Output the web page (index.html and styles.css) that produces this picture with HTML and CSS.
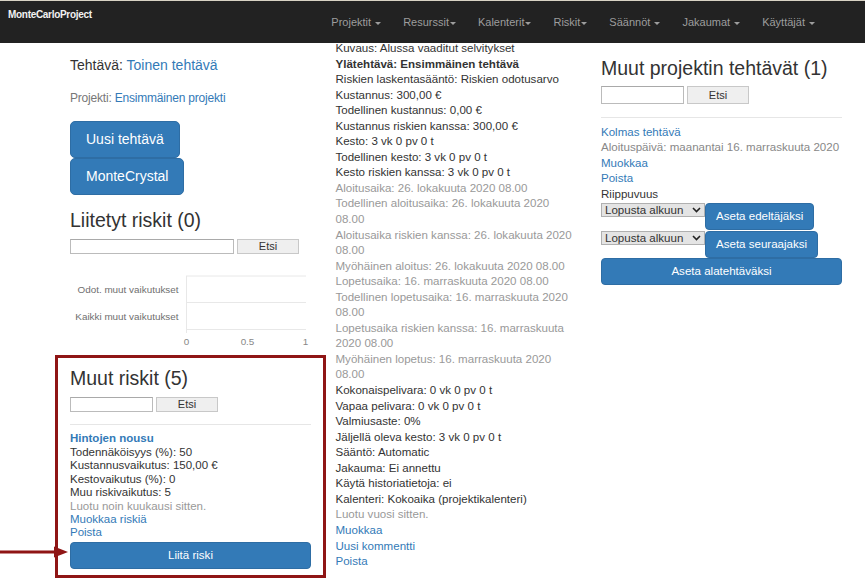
FILE: index.html
```html
<!DOCTYPE html>
<html lang="fi">
<head>
  <meta charset="UTF-8" />
  <title>MonteCarloProject - Toinen tehtävä</title>
  <link rel="stylesheet" href="styles.css">
</head>
<body>
  <nav class="navbar">
    <a class="brand" href="#">MonteCarloProject</a>
    <ul class="nav">
      <li>Projektit <span class="caret"></span></li>
      <li>Resurssit<span class="caret"></span></li>
      <li>Kalenterit<span class="caret"></span></li>
      <li>Riskit<span class="caret"></span></li>
      <li>Säännöt <span class="caret"></span></li>
      <li>Jakaumat <span class="caret"></span></li>
      <li>Käyttäjät <span class="caret"></span></li>
    </ul>
  </nav>

  <div class="page">
    <!-- left: task header + risks -->
    <div class="col">
      <h4 class="task-title">Tehtävä: <a href="#">Toinen tehtävä</a></h4>
      <div class="project"><span class="label">Projekti:</span> <a href="#">Ensimmäinen projekti</a></div>
      <div class="btn-stack">
        <button class="btn btn-lg">Uusi tehtävä</button>
        <button class="btn btn-lg">MonteCrystal</button>
      </div>

      <h3 class="section-title first">Liitetyt riskit (0)</h3>
      <div class="search">
        <input type="text" class="wide">
        <button class="search-btn">Etsi</button>
      </div>

      <svg class="chart" width="241" height="86" viewBox="0 0 241 86">
        <line x1="116" y1="14" x2="236" y2="14" stroke="#e8e8e8" />
        <line x1="116" y1="40.5" x2="236" y2="40.5" stroke="#e8e8e8" />
        <line x1="116" y1="67.5" x2="236" y2="67.5" stroke="#e8e8e8" />
        <line x1="116.5" y1="14" x2="116.5" y2="71" stroke="#e8e8e8" />
        <text x="108.5" y="30.5" text-anchor="end">Odot. muut vaikutukset</text>
        <text x="108.5" y="57.5" text-anchor="end">Kaikki muut vaikutukset</text>
        <text class="tick" x="116.5" y="83" text-anchor="middle">0</text>
        <text class="tick" x="177.5" y="83" text-anchor="middle">0.5</text>
        <text class="tick" x="235.5" y="83" text-anchor="middle">1</text>
      </svg>

      <div class="risk-box">
        <svg class="pointer" width="70" height="12" viewBox="0 0 70 12">
          <line x1="0" y1="6" x2="57" y2="6" stroke="#8f1515" stroke-width="3" />
          <polygon points="54,0.5 68,6 54,11.5" fill="#8f1515" />
        </svg>
        <h3 class="section-title">Muut riskit (5)</h3>
        <div class="search">
          <input type="text">
          <button class="search-btn">Etsi</button>
        </div>
        <hr>
        <div class="risk">
          <a href="#" class="risk-name">Hintojen nousu</a>
          <div>Todennäköisyys (%): 50</div>
          <div>Kustannusvaikutus: 150,00 €</div>
          <div>Kestovaikutus (%): 0</div>
          <div>Muu riskivaikutus: 5</div>
          <div class="muted">Luotu noin kuukausi sitten.</div>
          <a href="#">Muokkaa riskiä</a>
          <a href="#">Poista</a>
        </div>
        <button class="btn btn-block">Liitä riski</button>
      </div>
    </div>

    <!-- middle: task details -->
    <div class="col details">
      <div>Kuvaus: Alussa vaaditut selvitykset</div>
      <div class="strong">Ylätehtävä: Ensimmäinen tehtävä</div>
      <div>Riskien laskentasääntö: Riskien odotusarvo</div>
      <div>Kustannus: 300,00 €</div>
      <div>Todellinen kustannus: 0,00 €</div>
      <div>Kustannus riskien kanssa: 300,00 €</div>
      <div>Kesto: 3 vk 0 pv 0 t</div>
      <div>Todellinen kesto: 3 vk 0 pv 0 t</div>
      <div>Kesto riskien kanssa: 3 vk 0 pv 0 t</div>
      <div class="muted">Aloitusaika: 26. lokakuuta 2020 08.00</div>
      <div class="muted">Todellinen aloitusaika: 26. lokakuuta 2020 08.00</div>
      <div class="muted">Aloitusaika riskien kanssa: 26. lokakuuta 2020 08.00</div>
      <div class="muted">Myöhäinen aloitus: 26. lokakuuta 2020 08.00</div>
      <div class="muted">Lopetusaika: 16. marraskuuta 2020 08.00</div>
      <div class="muted">Todellinen lopetusaika: 16. marraskuuta 2020 08.00</div>
      <div class="muted">Lopetusaika riskien kanssa: 16. marraskuuta 2020 08.00</div>
      <div class="muted">Myöhäinen lopetus: 16. marraskuuta 2020 08.00</div>
      <div>Kokonaispelivara: 0 vk 0 pv 0 t</div>
      <div>Vapaa pelivara: 0 vk 0 pv 0 t</div>
      <div>Valmiusaste: 0%</div>
      <div>Jäljellä oleva kesto: 3 vk 0 pv 0 t</div>
      <div>Sääntö: Automatic</div>
      <div>Jakauma: Ei annettu</div>
      <div>Käytä historiatietoja: ei</div>
      <div>Kalenteri: Kokoaika (projektikalenteri)</div>
      <div class="muted">Luotu vuosi sitten.</div>
      <a href="#">Muokkaa</a>
      <a href="#">Uusi kommentti</a>
      <a href="#">Poista</a>
    </div>

    <!-- right: other tasks in project -->
    <div class="col">
      <h3 class="section-title top">Muut projektin tehtävät (1)</h3>
      <div class="search tall">
        <input type="text">
        <button class="search-btn">Etsi</button>
      </div>
      <hr>
      <div class="task">
        <a href="#">Kolmas tehtävä</a>
        <div class="grey nowrap">Aloituspäivä: maanantai 16. marraskuuta 2020</div>
        <a href="#">Muokkaa</a>
        <a href="#">Poista</a>
        <div>Riippuvuus</div>
      </div>
      <div class="dep-row">
        <span class="select-wrap">
          <select><option>Lopusta alkuun</option></select>
          <svg width="9" height="6" viewBox="0 0 9 6"><path d="M1 1 L4.5 4.5 L8 1" fill="none" stroke="#222" stroke-width="1.6" /></svg>
        </span>
        <button class="btn btn-sm">Aseta edeltäjäksi</button>
      </div>
      <div class="dep-row">
        <span class="select-wrap">
          <select><option>Lopusta alkuun</option></select>
          <svg width="9" height="6" viewBox="0 0 9 6"><path d="M1 1 L4.5 4.5 L8 1" fill="none" stroke="#222" stroke-width="1.6" /></svg>
        </span>
        <button class="btn btn-sm">Aseta seuraajaksi</button>
      </div>
      <button class="btn btn-block">Aseta alatehtäväksi</button>
    </div>
  </div>
</body>
</html>
```

FILE: styles.css
```css
body {
  margin: 0;
  font-family: "Liberation Sans", Arial, sans-serif;
  font-size: 11.55px;
  line-height: 15.55px;
  color: #333;
  background: #fff;
}

a {
  color: #337ab7;
  text-decoration: none;
}

/* Navbar */
.navbar {
  position: fixed;
  top: 0;
  left: 0;
  right: 0;
  height: 42px;
  background: #222;
  border-top: 1px solid #d8d2c4;
  display: flex;
  z-index: 10;
}

.brand {
  color: #f2f2f2;
  font-weight: bold;
  font-size: 10px;
  letter-spacing: -0.3px;
  line-height: 12px;
  padding: 8px 0 0 8px;
}

.nav {
  list-style: none;
  margin: 0 0 0 auto;
  padding: 0 39px 0 0;
  display: flex;
}

.nav li {
  color: #9d9d9d;
  font-size: 11px;
  line-height: 42px;
  padding: 0 11px;
}

.caret {
  display: inline-block;
  width: 0;
  height: 0;
  margin-left: 1px;
  vertical-align: middle;
  border-top: 3px solid #9d9d9d;
  border-left: 3px solid transparent;
  border-right: 3px solid transparent;
}

/* Page */
.page {
  display: grid;
  grid-template-columns: 241px 241px 241px;
  column-gap: 24.5px;
  align-items: start;
  padding: 41px 0 0 70px;
}

.task-title {
  margin: 17.3px 0 0;
  font-size: 14px;
  line-height: 15.4px;
  font-weight: normal;
}

.project {
  margin-top: 18px;
  font-size: 12px;
  line-height: 13.2px;
  letter-spacing: -0.2px;
}

.project .label {
  color: #777;
}

.btn-stack {
  display: flex;
  flex-direction: column;
  align-items: flex-start;
  margin-top: 16.5px;
}

.btn {
  font-family: inherit;
  background: #337ab7;
  border: 1px solid #2e6da4;
  color: #fff;
  border-radius: 4px;
  cursor: pointer;
}

.btn-lg {
  font-size: 14px;
  line-height: 17px;
  padding: 9px 15px;
  border-radius: 5px;
}

.btn-sm {
  font-size: 11.55px;
  line-height: 17px;
  padding: 4px 10px;
}

.btn-block {
  display: block;
  width: 100%;
  font-size: 11.55px;
  line-height: 17px;
  padding: 4px 10px;
}

.section-title {
  margin: 0;
  font-size: 19.5px;
  line-height: 21.7px;
  font-weight: normal;
}

.section-title.first {
  margin-top: 15px;
}

.section-title.top {
  margin-top: 17.3px;
}

.search {
  display: flex;
  gap: 3px;
  margin-top: 7px;
  height: 15px;
}

.search input {
  width: 83px;
  box-sizing: border-box;
  height: 100%;
  border: 1px solid #bbb;
  border-top-color: #a9a9a9;
  padding: 0 3px;
  margin: 0;
}

.search input.wide {
  width: 164px;
}

.search-btn {
  width: 62px;
  height: 100%;
  margin: 0;
  padding: 0;
  font-family: inherit;
  font-size: 11px;
  line-height: 13px;
  color: #333;
  background: #efefef;
  border: 1px solid #c8c8c8;
}

.search.tall {
  height: 18px;
  margin-top: 6px;
}

hr {
  border: 0;
  border-top: 1px solid #e6e6e6;
  margin: 12.5px 0 0;
}

.chart {
  display: block;
  margin-top: 8px;
}

.chart text {
  font-family: "Liberation Sans", Arial, sans-serif;
  font-size: 9.9px;
  fill: #6f6f6f;
}

.chart text.tick {
  fill: #888;
}

/* Muut riskit box */
.risk-box {
  position: relative;
  margin: 7px -15px 0;
  padding: 10px 12px 6px;
  border: 3px solid #8f1515;
}

.pointer {
  position: absolute;
  left: -58px;
  top: 188px;
}

.risk {
  margin-top: 7px;
  font-size: 11.5px;
  line-height: 13.45px;
}

.risk a,
.risk div {
  display: block;
}

.risk .risk-name {
  font-weight: bold;
}

.risk-box .btn-block {
  margin-top: 2px;
  height: 27px;
}

.muted {
  color: #999;
}

.grey {
  color: #888;
}

.nowrap {
  white-space: nowrap;
}

.strong {
  font-weight: bold;
}

/* Details column */
.details a {
  display: block;
}

/* Right column */
.task {
  margin-top: 7px;
}

.task a {
  display: block;
}

.dep-row {
  display: flex;
  align-items: flex-start;
  margin-top: 1px;
}

.select-wrap {
  position: relative;
  display: inline-block;
}

.select-wrap select {
  appearance: none;
  -webkit-appearance: none;
  width: 104px;
  height: 14px;
  margin: 0;
  padding: 0 0 0 3px;
  font-family: inherit;
  font-size: 11.55px;
  line-height: 12px;
  color: #333;
  background: #e4e4e4;
  border: 1px solid #b0b0b0;
  border-radius: 0;
}

.select-wrap svg {
  position: absolute;
  right: 4px;
  top: 4px;
  pointer-events: none;
}

.dep-row .btn-sm {
  height: 27px;
}

.col > .btn-block {
  margin-top: 0;
  height: 27px;
}
```
